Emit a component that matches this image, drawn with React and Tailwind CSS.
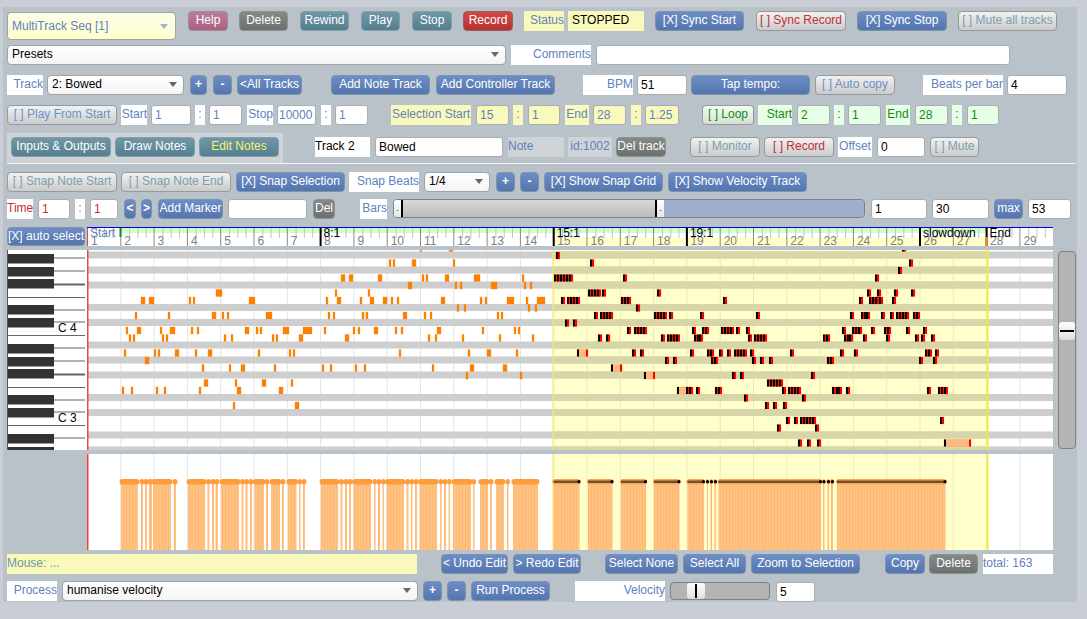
import React from 'react';

const blue = 'bg-gradient-to-b from-[#6c8dc5] to-[#5475ad] border-[#7f93a8] text-white';
const teal = 'bg-gradient-to-b from-[#6f97a8] to-[#557f90] border-[#84a0ab] text-white';
const gray = 'bg-gradient-to-b from-[#858a88] to-[#6c716f] border-[#8c9290] text-white';
const off = 'bg-gradient-to-b from-[#f2f2f2] to-[#c9cbcc] border-[#999] text-[#7f9db0]';
const offBlue = 'bg-gradient-to-b from-[#f2f2f2] to-[#c9cbcc] border-[#999] text-[#6f8fc4]';
const offRed = 'bg-gradient-to-b from-[#f2f2f2] to-[#c9cbcc] border-[#999] text-[#c23030]';

function Btn({ tone = blue, className = '', children }) {
  return (
    <button className={`h-[20px] shrink-0 pb-[2px] rounded-[4px] border text-[12px] leading-none whitespace-nowrap flex items-center justify-center ${tone} ${className}`}>
      {children}
    </button>
  );
}

function Lbl({ className = '', children }) {
  return (
    <div className={`h-[20px] shrink-0 pb-[2px] flex items-center justify-end bg-white text-[12px] text-[#5f81bd] whitespace-nowrap overflow-hidden ${className}`}>
      {children}
    </div>
  );
}

function Field({ value = '', className = '' }) {
  return (
    <input
      readOnly
      value={value}
      className={`h-[20px] shrink-0 rounded-[3px] border border-[#a9aeb2] bg-white px-[3px] text-[12px] text-black outline-none ${className}`}
    />
  );
}

function Sel({ className = '', children }) {
  return (
    <div className={`h-[20px] shrink-0 pb-[2px] flex items-center justify-between rounded-[4px] border border-[#a0a4a8] bg-gradient-to-b from-white to-[#f4f4f4] pl-[4px] pr-[6px] text-[12px] text-black ${className}`}>
      <span>{children}</span>
      <svg width="8" height="5" viewBox="0 0 8 5"><path d="M0 0h8L4 5z" fill="#666" /></svg>
    </div>
  );
}

const barX = (n) => 87.5 + 33.3 * (n - 1);
const bars = Array.from({ length: 29 }, (_, i) => i + 1);

// unselected notes: row -> [x, width]
const plain = {
  '-1': [[420, 2], [449, 4]],
  1: [[389, 2], [393, 2], [412, 4], [453, 2]],
  3: [[341, 4], [349, 4], [378, 4], [422, 2], [426, 2], [445, 4], [474, 6], [522, 2]],
  4: [[408, 4], [455, 2], [460, 2], [491, 6], [524, 2], [530, 2]],
  5: [[216, 6], [335, 2], [368, 2]],
  6: [[141, 4], [149, 5], [189, 2], [193, 2], [249, 6], [326, 2], [337, 4], [360, 2], [370, 4], [383, 4], [391, 2], [397, 2], [441, 4], [480, 2], [485, 2], [507, 7], [526, 2], [537, 8]],
  7: [[457, 2], [464, 2], [528, 2], [535, 2]],
  8: [[135, 2], [168, 2], [212, 4], [222, 2], [227, 2], [266, 6], [328, 2], [333, 2], [362, 2], [366, 2], [403, 4], [424, 2], [430, 2], [497, 2], [501, 2]],
  10: [[126, 2], [137, 4], [160, 2], [170, 5], [191, 2], [197, 2], [245, 4], [256, 2], [260, 2], [283, 6], [303, 9], [324, 2], [353, 2], [358, 2], [374, 4], [395, 2], [401, 2], [437, 4], [482, 2], [514, 2], [518, 2]],
  11: [[129, 2], [133, 2], [162, 2], [166, 2], [224, 2], [231, 2], [272, 2], [276, 2], [299, 4], [345, 4], [428, 2], [435, 2], [462, 2], [499, 2], [532, 2]],
  13: [[124, 2], [154, 2], [158, 2], [175, 4], [195, 2], [208, 4], [258, 2], [289, 2], [293, 2], [399, 2], [468, 2], [487, 4], [516, 2]],
  14: [[145, 4]],
  15: [[202, 2], [229, 2], [241, 4], [274, 2], [322, 2], [330, 2], [355, 2], [364, 2], [432, 2], [470, 4], [503, 4]],
  16: [[466, 2], [520, 2]],
  17: [[204, 4], [235, 2], [262, 4], [291, 2]],
  18: [[122, 2], [131, 2], [156, 2], [164, 2], [199, 2], [237, 4], [279, 4]],
  20: [[233, 2], [295, 4]],
};

// selected notes: row -> start x (4px wide) or [x, width]
const picked = {
  '-1': [902],
  0: [556],
  1: [590, 909],
  2: [898],
  3: [554, 557, 560, 563, 566, 569, 623, 875],
  5: [588, 591, 594, 597, 602, 657, 867, 877, 894, 911],
  6: [561, 567, 570, 573, 576, 621, 624, 627, 723, 859, 869, 872, 875, 879, 892],
  7: [636],
  8: [594, 600, 603, 606, 609, 654, 657, 660, 663, 669, 700, 756, 850, 861, 864, 866, 881, 890, 896, 899, 902, 905, 913, 916],
  9: [565, 573],
  10: [627, 634, 637, 640, 643, 692, 702, 705, 721, 724, 727, 730, 736, 746, 842, 852, 855, 858, 871, 884, 887, 906, 923],
  11: [598, 606, 661, 667, 670, 673, 676, 694, 697, 699, 748, 754, 757, 760, 763, 823, 826, 844, 847, 849, 863, 886, 915, 921, 931],
  13: [[577, 11], 632, 640, 690, 707, 710, 719, 727, 734, 737, 740, 743, 750, 790, 840, 854, 925, 928, 935],
  14: [665, 673, 711, 714, 752, 760, 769, 827, 830, 919, 933],
  15: [[611, 11]],
  16: [[644, 11], 732, 740, 811],
  17: [767, 770, 773, 776, 779],
  18: [[677, 11], 686, 689, 696, 715, 718, 782, 788, 791, 794, 797, 832, 836, 838, 846, 927, 938, 941, 944],
  19: [744, 802],
  20: [765, 773, 783],
  22: [786, 794, 800, 803, 806, 809, 812, 940],
  23: [777, 815],
  25: [798, 807, 817, [944, 27]],
};

const rowY = (i) => 251.5 + 7.5 * i;
const bandRows = [0, 2, 4, 7, 9, 12, 14, 16, 19, 21, 24, 26];

function PianoRoll() {
  return (
    <svg width="966" height="200" viewBox="87 250 966 200" className="block shrink-0">
      <rect x="87" y="250" width="966" height="200" fill="#fff" />
      <rect x="553" y="250" width="434" height="200" fill="#ffffcc" />
      {bars.slice(1).map((n) => (
        <rect key={n} x={barX(n) - 0.5} y="250" width="1" height="200" fill={n >= 15 && n < 28 ? '#e9e9b8' : '#e4e4e4'} />
      ))}
      {bandRows.map((i) => (
        <g key={i}>
          <rect x="88" y={rowY(i)} width="965" height="7" fill="#cecece" />
          <rect x="553" y={rowY(i)} width="434" height="7" fill="#d8d6a8" />
        </g>
      ))}
      {Object.entries(plain).map(([i, notes]) =>
        notes.map(([x, w]) => (
          <rect key={`${i}-${x}`} x={x} y={rowY(+i) + 0.5} width={w} height="7" fill="#ff8000" stroke="#ff8000" strokeOpacity="0.3" />
        ))
      )}
      {Object.entries(picked).map(([i, notes]) =>
        notes.map((n) => {
          const [x, w] = Array.isArray(n) ? n : [n, 4];
          const y = rowY(+i) + 0.5;
          return (
            <g key={`${i}-${x}`}>
              <rect x={x} y={y} width={w} height="7" fill="#ffb880" stroke="#ff8000" strokeOpacity="0.25" />
              <rect x={x} y={y} width="2" height="7" fill="#000" />
              <rect x={x + w - 2} y={y} width="2" height="7" fill="#ff0000" />
            </g>
          );
        })
      )}
      <rect x="87" y="250" width="1.5" height="200" fill="#e0494e" />
      <rect x="552.5" y="250" width="1" height="200" fill="#ffe94d" />
      <rect x="987" y="250" width="1.5" height="200" fill="#ffee00" />
    </svg>
  );
}

function Ruler() {
  const marks = [
    [8, '8:1'],
    [15, '15:1'],
    [19, '19:1'],
    [26, 'slowdown'],
    [28, 'End'],
  ];
  return (
    <svg width="966" height="19" viewBox="87 227 966 19" className="block shrink-0" fontFamily="Liberation Sans, sans-serif">
      <rect x="87" y="227" width="966" height="19" fill="#fff" />
      <rect x="120" y="228" width="867" height="5" fill="#ccffcc" />
      <rect x="553" y="237" width="434" height="9" fill="#ffffcc" />
      {bars.map((n) => (
        <g key={n}>
          <rect x={barX(n) - 0.5} y="227" width="1" height="19" fill="#888" />
          {[1, 2, 3].map((k) => (
            <rect key={k} x={barX(n) + 8.3 * k} y="228" width="1" height="10" fill="#c4c4c4" />
          ))}
          <text x={barX(n) + 3.5} y="244.5" fontSize="12" fill="#808080">{n}</text>
        </g>
      ))}
      <rect x="87" y="227" width="966" height="1" fill="#0000e0" />
      <rect x="87" y="228" width="1" height="18" fill="#e0494e" />
      <rect x="119.5" y="228" width="2" height="9" fill="#1a8a1a" />
      <text x="90" y="236.5" fontSize="12" fill="#5f81bd">Start</text>
      {marks.map(([n, t]) => (
        <g key={t}>
          <rect x={barX(n) - 1} y="228" width="2" height="18" fill="#000" />
          <text x={barX(n) + 3} y="236.5" fontSize="12" fill="#000">{t}</text>
        </g>
      ))}
      <rect x={barX(28) - 1} y="237" width="2" height="9" fill="#ff9900" />
    </svg>
  );
}

const velPlain = [
  [121, 138], [141, 143], [145, 147], [149, 152], [153, 171], [174, 176],
  [188, 205], [207.5, 209.5], [212, 214], [215.5, 218], [221, 239], [241.5, 243.5], [245.5, 247.5], [250, 252],
  [254.5, 264], [266, 268], [271, 280], [282, 284], [288, 296.5], [299, 300.5], [303, 305],
  [321, 338], [340.5, 342.5], [345, 347], [349, 351], [353.5, 371], [374, 375.5], [378, 380], [382.5, 384],
  [386.5, 404], [406.5, 408.5], [411, 412.5], [415, 417], [419.5, 437], [440, 441.5], [444, 446], [448.5, 450],
  [453, 471], [473, 474.5], [480, 488], [490, 492], [496, 504], [507, 508.5], [513, 538],
];
const velPicked = [
  [553, 579.5], [588, 612.5], [621, 646], [654, 679.5], [687.5, 704], [707, 708], [710.5, 712], [714.5, 716],
  [718.5, 821], [823, 824.5], [827.5, 829], [831, 833], [837, 945.5],
];

function VelocityTrack() {
  return (
    <svg width="966" height="96" viewBox="87 454 966 96" className="block shrink-0">
      <defs>
        <pattern id="velStripes" width="3" height="10" patternUnits="userSpaceOnUse">
          <rect width="3" height="10" fill="#ffc184" />
          <rect width="1" height="10" fill="#ffb870" />
        </pattern>
      </defs>
      <rect x="87" y="454" width="966" height="96" fill="#fff" />
      <rect x="553" y="454" width="434" height="96" fill="#ffffcc" />
      {bars.slice(1).map((n) => (
        <rect key={n} x={barX(n) - 0.5} y="454" width="1" height="96" fill={n >= 15 && n < 28 ? '#ecebb8' : '#e4e4e4'} />
      ))}
      {velPlain.map(([a, b]) => (
        <g key={a}>
          <rect x={a} y="482" width={b - a} height="68" fill="url(#velStripes)" />
          <rect x={a - 1.5} y="479" width={b - a + 3} height="5.5" rx="2.75" fill="#ff9c3c" />
        </g>
      ))}
      {velPicked.map(([a, b]) => (
        <g key={a}>
          <rect x={a} y="482" width={b - a} height="68" fill="url(#velStripes)" />
          <rect x={a - 1} y="479" width={b - a + 2} height="5.5" rx="2.75" fill="#ffa54f" />
          <rect x={a} y="480.5" width={b - a} height="2.5" fill="#6e5230" />
          <circle cx={b - 0.5} cy="481.7" r="1.6" fill="#000" />
        </g>
      ))}
      <rect x="87" y="454" width="1.5" height="96" fill="#ff3b3b" />
      <rect x="552.5" y="454" width="1" height="96" fill="#ffe94d" />
      <rect x="987" y="454" width="1.5" height="96" fill="#ffee00" />
    </svg>
  );
}

function Keys() {
  const blacks = [254, 267, 279, 305, 318, 344, 357, 369, 395, 408, 434, 447];
  const short = [258, 271, 284, 310, 322, 348, 361, 374, 400, 412, 438];
  const full = [297, 335, 387, 425];
  return (
    <svg width="80" height="200" viewBox="7 250 80 200" className="block shrink-0" fontFamily="Liberation Sans, sans-serif">
      <rect x="7" y="250" width="80" height="200" fill="#fff" />
      <rect x="7" y="250" width="1" height="200" fill="#555" />
      {full.map((y) => <rect key={y} x="8" y={y} width="77" height="1" fill="#666" />)}
      {short.map((y) => <rect key={y} x="54" y={y - 0.5} width="31" height={y === 284 || y === 374 ? 2 : 1} fill="#666" />)}
      {blacks.map((y) => (
        <g key={y}>
          <rect x="8" y={y} width="46" height={y === 447 ? 3 : 9} fill="#333" />
          <rect x="8" y={y + 9} width="46" height="1" fill="#999" />
        </g>
      ))}
      <text x="58" y="332" fontSize="12" fill="#000">C 4</text>
      <text x="58" y="422" fontSize="12" fill="#000">C 3</text>
    </svg>
  );
}

export default function App() {
  return (
    <div className="min-h-screen bg-[#c9ced6] pt-[7px] pl-[3px] font-['Liberation_Sans',Arial,sans-serif]">
      <div className="w-[1074px] h-[595px] bg-[#b9c2c8] pl-[4px] pt-[4px] flex flex-col">
        {/* transport row */}
        <div className="flex items-start h-[29px]">
          <div className="mt-[1px] w-[169px] h-[28px] shrink-0 flex items-center justify-between rounded-[4px] border border-[#a0a4a8] bg-gradient-to-b from-[#fdfde8] to-[#ffffcc] pl-[4px] pr-[7px] text-[12px] text-[#5f81bd]">
            <span>MultiTrack Seq [1]</span>
            <svg width="8" height="5" viewBox="0 0 8 5"><path d="M0 0h8L4 5z" fill="#9fb3d6" /></svg>
          </div>
          <Btn tone="bg-gradient-to-b from-[#bd7d9b] to-[#ab5f82] border-[#9a8f98] text-white" className="ml-[12px] w-[40px]">Help</Btn>
          <Btn tone={gray} className="ml-[11px] w-[49px]">Delete</Btn>
          <Btn tone={teal} className="ml-[12px] w-[49px]">Rewind</Btn>
          <Btn tone={teal} className="ml-[12px] w-[39px]">Play</Btn>
          <Btn tone={teal} className="ml-[12px] w-[40px]">Stop</Btn>
          <Btn tone="bg-gradient-to-b from-[#cf4a48] to-[#b73232] border-[#a05a5a] text-white" className="ml-[11px] w-[50px]">Record</Btn>
          <Lbl className="ml-[11px] w-[40px] !bg-[#f9f9bb]">Status</Lbl>
          <div className="ml-[4px] w-[76px] h-[20px] shrink-0 pb-[2px] bg-[#f9f9bb] pl-[4px] text-[12px] text-black flex items-center">STOPPED</div>
          <Btn className="ml-[11px] w-[89px]">[X] Sync Start</Btn>
          <Btn tone={offRed} className="ml-[12px] w-[90px]">[ ] Sync Record</Btn>
          <Btn className="ml-[11px] w-[90px]">[X] Sync Stop</Btn>
          <Btn tone={off} className="ml-[11px] w-[99px]">[ ] Mute all tracks</Btn>
        </div>

        {/* presets */}
        <div className="flex items-start mt-[5px]">
          <Sel className="w-[499px]">Presets</Sel>
          <Lbl className="ml-[5px] w-[80px]">Comments</Lbl>
          <Field className="ml-[5px] w-[414px]" />
        </div>

        {/* tracks */}
        <div className="flex items-start mt-[10px]">
          <Lbl className="w-[36px]">Track</Lbl>
          <Sel className="ml-[4px] w-[137px]">2: Bowed</Sel>
          <Btn className="ml-[6px] w-[17px] font-bold">+</Btn>
          <Btn className="ml-[6px] w-[19px] font-bold">-</Btn>
          <Btn className="ml-[5px] w-[65px]">&lt;All Tracks</Btn>
          <Btn className="ml-[29px] w-[99px]">Add Note Track</Btn>
          <Btn className="ml-[6px] w-[119px]">Add Controller Track</Btn>
          <Lbl className="ml-[28px] w-[50px]">BPM</Lbl>
          <Field value="51" className="ml-[4px] w-[50px]" />
          <Btn className="ml-[4px] w-[119px]">Tap tempo:</Btn>
          <Btn tone={offBlue} className="ml-[5px] w-[80px]">[ ] Auto copy</Btn>
          <Lbl className="ml-[28px] w-[80px]">Beats per bar</Lbl>
          <Field value="4" className="ml-[4px] w-[60px]" />
        </div>

        {/* play range, selection, loop */}
        <div className="flex items-start mt-[10px]">
          <Btn tone={offBlue} className="w-[110px]">[ ] Play From Start</Btn>
          <Lbl className="ml-[4px] w-[26px]">Start</Lbl>
          <Field value="1" className="ml-[4px] w-[40px] !text-[#5f81bd]" />
          <Lbl className="ml-[4px] w-[10px] !justify-center">:</Lbl>
          <Field value="1" className="ml-[4px] w-[33px] !text-[#5f81bd]" />
          <Lbl className="ml-[5px] w-[26px]">Stop</Lbl>
          <Field value="10000" className="ml-[4px] w-[39px] !px-[1px] !text-[#5f81bd]" />
          <Lbl className="ml-[5px] w-[10px] !justify-center">:</Lbl>
          <Field value="1" className="ml-[4px] w-[33px] !text-[#5f81bd]" />
          <Lbl className="ml-[23px] w-[80px] !justify-center !bg-[#f9f9bb]">Selection Start</Lbl>
          <Field value="15" className="ml-[5px] w-[33px] !bg-[#f9f9bb] !text-[#5f81bd]" />
          <Lbl className="ml-[4px] w-[10px] !justify-center !bg-[#f9f9bb]">:</Lbl>
          <Field value="1" className="ml-[5px] w-[32px] !bg-[#f9f9bb] !text-[#5f81bd]" />
          <Lbl className="ml-[5px] w-[24px] !justify-center !bg-[#f9f9bb]">End</Lbl>
          <Field value="28" className="ml-[4px] w-[33px] !bg-[#f9f9bb] !text-[#5f81bd]" />
          <Lbl className="ml-[5px] w-[10px] !justify-center !bg-[#f9f9bb]">:</Lbl>
          <Field value="1.25" className="ml-[4px] w-[34px] !bg-[#f9f9bb] !text-[#5f81bd]" />
          <Btn tone="bg-gradient-to-b from-[#f4fff4] to-[#d3dfd3] border-[#999] text-[#128a12]" className="ml-[23px] w-[52px]">[ ] Loop</Btn>
          <Lbl className="ml-[4px] w-[34px] !bg-[#e6ffe6] !text-[#128a12]">Start</Lbl>
          <Field value="2" className="ml-[5px] w-[33px] !bg-[#e6ffe6] !text-[#128a12]" />
          <Lbl className="ml-[4px] w-[10px] !justify-center !bg-[#e6ffe6] !text-[#128a12]">:</Lbl>
          <Field value="1" className="ml-[4px] w-[33px] !bg-[#e6ffe6] !text-[#128a12]" />
          <Lbl className="ml-[5px] w-[24px] !justify-center !bg-[#e6ffe6] !text-[#128a12]">End</Lbl>
          <Field value="28" className="ml-[5px] w-[33px] !bg-[#e6ffe6] !text-[#128a12]" />
          <Lbl className="ml-[4px] w-[10px] !justify-center !bg-[#e6ffe6] !text-[#128a12]">:</Lbl>
          <Field value="1" className="ml-[5px] w-[32px] !bg-[#e6ffe6] !text-[#128a12]" />
        </div>

        {/* tabs and track settings */}
        <div className="flex items-start mt-[8px] h-[30px]">
          <div className="w-[276px] h-[30px] shrink-0 bg-[#ced3d8] flex items-start pt-[4px] pl-[4px]">
            <Btn tone={teal} className="w-[100px]">Inputs &amp; Outputs</Btn>
            <Btn tone={teal} className="ml-[4px] w-[80px]">Draw Notes</Btn>
            <Btn tone={teal} className="ml-[4px] w-[80px] !text-[#f4f46a]">Edit Notes</Btn>
          </div>
          <Lbl className="ml-[32px] mt-[4px] w-[55px] !justify-start !text-black">Track 2</Lbl>
          <Field value="Bowed" className="ml-[5px] mt-[4px] w-[128px]" />
          <Lbl className="ml-[5px] mt-[4px] w-[56px] !justify-start !bg-[#ced3d8]">Note</Lbl>
          <Lbl className="ml-[4px] mt-[4px] w-[44px] !justify-center !bg-[#ced3d8]">id:1002</Lbl>
          <Btn tone={gray} className="ml-[4px] mt-[4px] w-[50px]">Del track</Btn>
          <Btn tone={off} className="ml-[24px] mt-[4px] w-[70px]">[ ] Monitor</Btn>
          <Btn tone={offRed} className="ml-[4px] mt-[4px] w-[70px]">[ ] Record</Btn>
          <Lbl className="ml-[4px] mt-[4px] w-[34px] !justify-center">Offset</Lbl>
          <Field value="0" className="ml-[5px] mt-[4px] w-[48px]" />
          <Btn tone={off} className="ml-[5px] mt-[4px] w-[49px]">[ ] Mute</Btn>
        </div>
        <div className="h-px w-[1069px] bg-[#f2f4f5] shrink-0" />

        {/* snapping */}
        <div className="flex items-start mt-[8px]">
          <Btn tone={off} className="w-[110px]">[ ] Snap Note Start</Btn>
          <Btn tone={off} className="ml-[4px] w-[110px]">[ ] Snap Note End</Btn>
          <Btn className="ml-[5px] w-[109px]">[X] Snap Selection</Btn>
          <Lbl className="ml-[4px] w-[70px]">Snap Beats</Lbl>
          <Sel className="ml-[5px] w-[66px]">1/4</Sel>
          <Btn className="ml-[6px] w-[19px] font-bold">+</Btn>
          <Btn className="ml-[5px] w-[19px] font-bold">-</Btn>
          <Btn className="ml-[5px] w-[119px]">[X] Show Snap Grid</Btn>
          <Btn className="ml-[5px] w-[139px]">[X] Show Velocity Track</Btn>
        </div>

        {/* time, markers, bars slider */}
        <div className="flex items-start mt-[7px]">
          <Lbl className="w-[26px] !text-[#c23030] !justify-start">Time</Lbl>
          <Field value="1" className="ml-[5px] w-[32px] !text-[#c23030]" />
          <Lbl className="ml-[5px] w-[10px] !justify-center">:</Lbl>
          <Field value="1" className="ml-[5px] w-[28px] !text-[#c23030]" />
          <Btn className="ml-[6px] w-[12px] font-bold">&lt;</Btn>
          <Btn className="ml-[5px] w-[11px] font-bold">&gt;</Btn>
          <Btn className="ml-[6px] w-[65px]">Add Marker</Btn>
          <Field className="ml-[5px] w-[79px]" />
          <Btn tone={gray} className="ml-[6px] w-[22px]">Del</Btn>
          <Lbl className="ml-[25px] w-[27px]">Bars</Lbl>
          <div className="relative ml-[6px] w-[472px] h-[19px] shrink-0 flex rounded-[4px] border border-[#7c8288] overflow-hidden">
            <div className="w-[270px] bg-gradient-to-b from-[#d8d8d8] to-[#bcbcbc]" />
            <div className="flex-1 bg-[#9fb0cc]" />
            <div className="absolute left-0 top-0 h-full w-[9px] bg-gradient-to-b from-white to-[#e6e6e6] border-r-2 border-black flex items-center justify-center text-[9px] leading-none text-black">.</div>
            <div className="absolute left-[261px] top-0 h-full w-[9px] bg-gradient-to-b from-white to-[#e6e6e6] border-l-2 border-black flex items-center justify-center text-[9px] leading-none text-black">.</div>
          </div>
          <Field value="1" className="ml-[6px] w-[56px]" />
          <Field value="30" className="ml-[5px] w-[57px]" />
          <Btn className="ml-[5px] w-[29px]">max</Btn>
          <Field value="53" className="ml-[5px] w-[43px]" />
        </div>

        {/* ruler */}
        <div className="flex items-start mt-[8px]">
          <Btn className="w-[78px] !h-[19px]">[X] auto select</Btn>
          <div className="ml-[2px]"><Ruler /></div>
        </div>

        {/* piano roll */}
        <div className="flex items-start mt-[4px]">
          <Keys />
          <PianoRoll />
          <div className="relative ml-[5px] mt-px w-[18px] h-[198px] shrink-0 rounded-[4px] border border-[#7c8288] bg-[#b4b4b4]">
            <div className="absolute left-0 top-[70px] w-full h-[18px] rounded-[3px] bg-gradient-to-b from-white to-[#dedede] flex items-center justify-center">
              <div className="w-[14px] h-[2px] bg-black" />
            </div>
          </div>
        </div>

        {/* velocity */}
        <div className="flex mt-[4px] pl-[80px]">
          <VelocityTrack />
        </div>

        {/* edit buttons */}
        <div className="flex items-start mt-[4px]">
          <div className="w-[410px] h-[20px] shrink-0 pb-[2px] bg-[#f9f9bb] text-[12px] text-[#6f97a8] flex items-center">Mouse: ...</div>
          <Btn className="ml-[24px] w-[67px]">&lt; Undo Edit</Btn>
          <Btn className="ml-[5px] w-[68px]">&gt; Redo Edit</Btn>
          <Btn className="ml-[24px] w-[73px]">Select None</Btn>
          <Btn className="ml-[5px] w-[63px]">Select All</Btn>
          <Btn className="ml-[5px] w-[109px]">Zoom to Selection</Btn>
          <Btn className="ml-[25px] w-[40px]">Copy</Btn>
          <Btn tone={gray} className="ml-[4px] w-[49px]">Delete</Btn>
          <Lbl className="ml-[5px] w-[70px] !justify-start">total: 163</Lbl>
        </div>

        {/* process */}
        <div className="flex items-start mt-[7px]">
          <Lbl className="w-[50px]">Process</Lbl>
          <Sel className="ml-[5px] w-[356px]">humanise velocity</Sel>
          <Btn className="ml-[5px] w-[19px] font-bold">+</Btn>
          <Btn className="ml-[5px] w-[19px] font-bold">-</Btn>
          <Btn className="ml-[5px] w-[79px]">Run Process</Btn>
          <Lbl className="ml-[25px] w-[90px]">Velocity</Lbl>
          <div className="relative ml-[5px] mt-px w-[100px] h-[18px] shrink-0 rounded-[4px] border border-[#7c8288] bg-[#b4b4b4]">
            <div className="absolute left-[16px] top-0 w-[18px] h-full rounded-[3px] bg-gradient-to-b from-white to-[#dedede] flex items-center justify-center">
              <div className="w-[2px] h-[14px] bg-black" />
            </div>
          </div>
          <Field value="5" className="ml-[6px] mt-px w-[39px]" />
        </div>
      </div>
    </div>
  );
}
